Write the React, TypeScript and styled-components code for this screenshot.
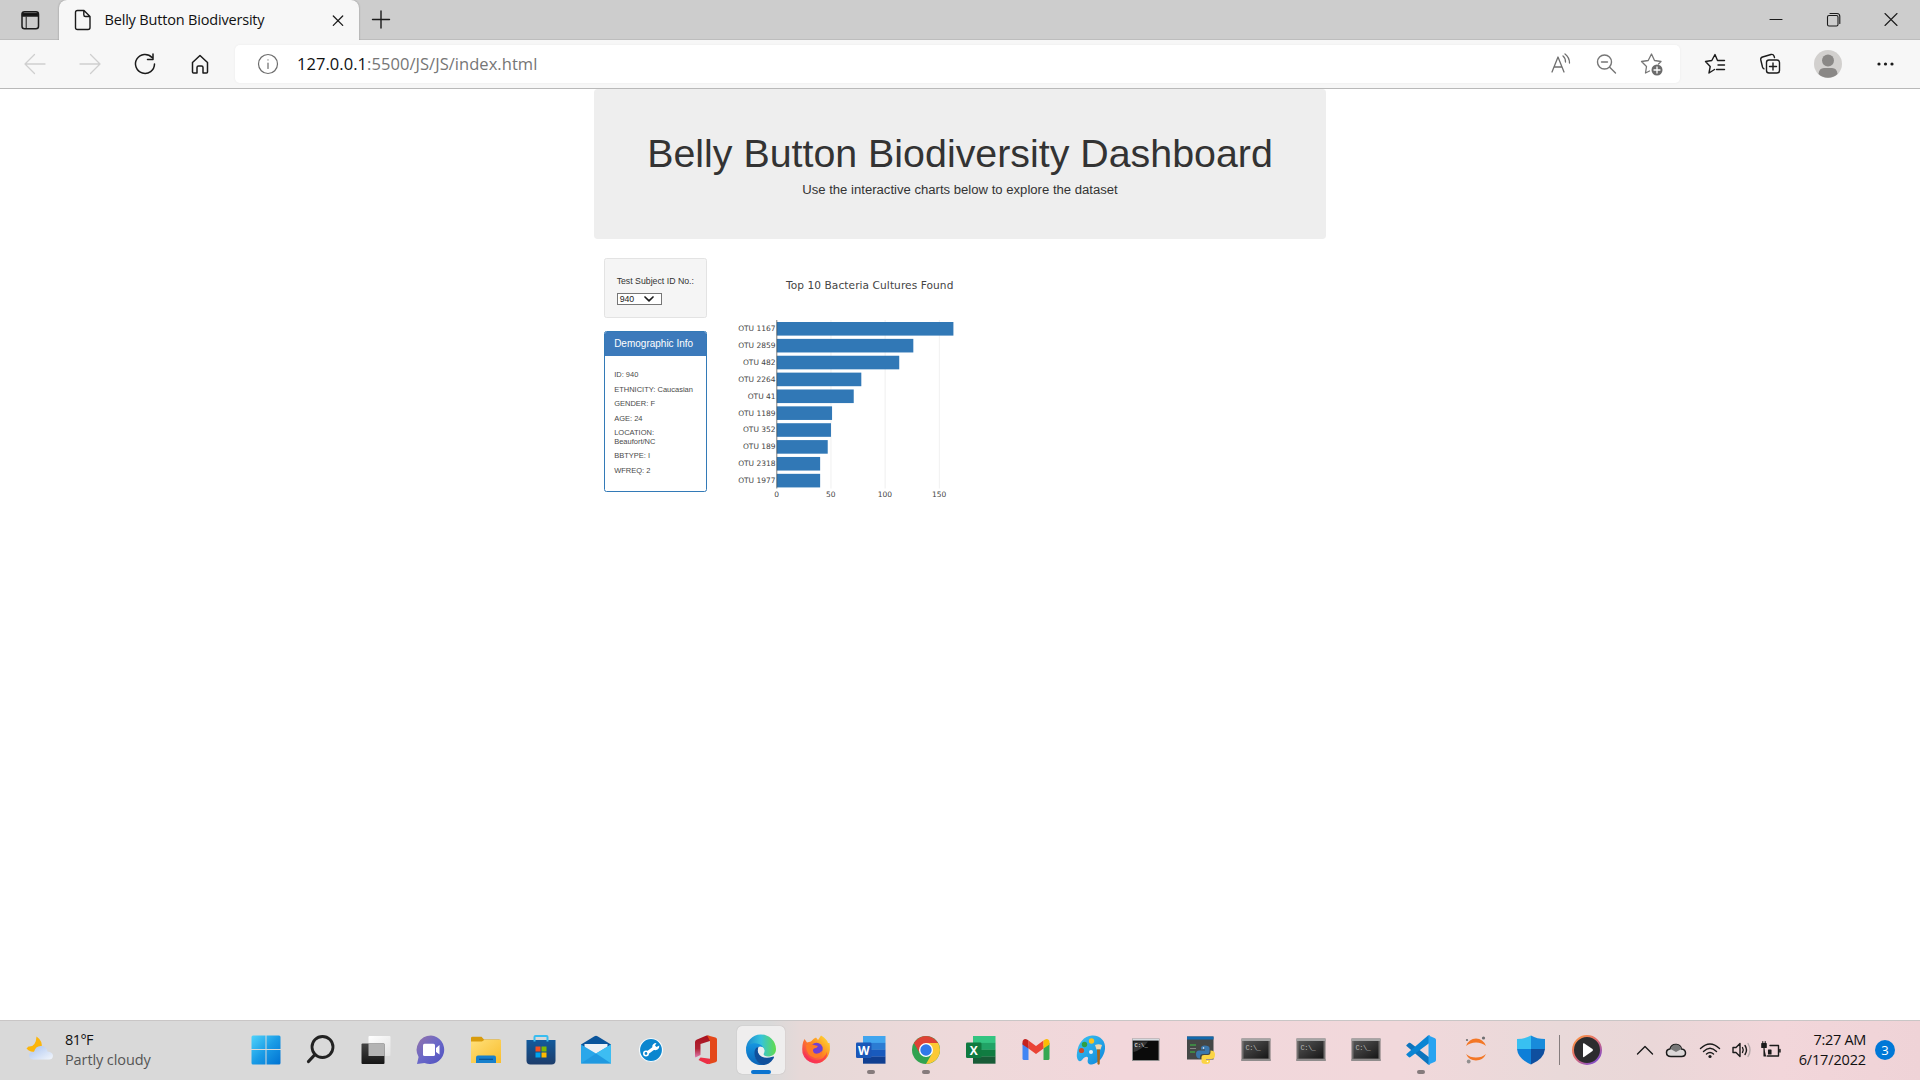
import React from "react";
import styled, { createGlobalStyle } from "styled-components";

const Global = createGlobalStyle`
  * { box-sizing: border-box; }
  html, body { margin: 0; padding: 0; background: #fff; }
  body { width: 1920px; height: 1080px; overflow: hidden; }
`;

const ui = `"Open Sans", "Noto Sans", sans-serif`;
const arial = `"Liberation Sans", Arial, sans-serif`;

const Screen = styled.div`
  width: 1920px;
  height: 1080px;
  display: flex;
  flex-direction: column;
  background: #fff;
  font-family: ${ui};
`;

const Label = styled.span<{ $size: number; $gap?: number; $color?: string }>`
  font-size: ${(p) => p.$size}px;
  letter-spacing: ${(p) => p.$gap ?? 0}px;
  color: ${(p) => p.$color ?? "#111"};
  white-space: nowrap;
`;

/* ---------- browser frame ---------- */

const TabStrip = styled.div`
  height: 40px;
  flex: none;
  display: flex;
  align-items: stretch;
  background: #cdcdcd;
  box-shadow: inset 0 -1px 0 #bdbdbd;
`;

const TabMenu = styled.div`
  width: 59px;
  display: flex;
  align-items: center;
  justify-content: center;
`;

const Tab = styled.div`
  width: 300px;
  display: flex;
  align-items: center;
  padding: 0 13px 0 14px;
  background: #f7f7f7;
  border-radius: 8px 8px 0 0;
  box-shadow: 0 0 2px rgba(0, 0, 0, 0.35);
  clip-path: inset(0 -3px 0 -3px);
`;

const TabTitle = styled.div`
  flex: 1;
  padding: 0 0 2px 11.5px;
  line-height: 20px;
`;

const NewTab = styled.div`
  width: 43px;
  display: flex;
  align-items: center;
  justify-content: center;
`;

const WindowButtons = styled.div`
  margin-left: auto;
  display: flex;
  align-items: center;
`;

const WindowButton = styled.div`
  width: 57.5px;
  display: flex;
  justify-content: center;
`;

const Toolbar = styled.div`
  height: 49px;
  flex: none;
  display: flex;
  align-items: center;
  background: #f7f7f7;
  border-bottom: 1px solid #b9b9b9;
`;

const NavButtons = styled.div`
  width: 235px;
  display: flex;
  padding-left: 7px;
`;

const ToolButton = styled.div<{ $w: number }>`
  width: ${(p) => p.$w}px;
  height: 32px;
  display: flex;
  align-items: center;
  justify-content: center;
  padding-bottom: 1px;
`;

const AddressBar = styled.div`
  width: 1445px;
  height: 38px;
  display: flex;
  align-items: center;
  padding: 0 4px 0 16px;
  background: #fff;
  border-radius: 5px;
  box-shadow: 0 0 3px rgba(0, 0, 0, 0.05);
`;

const Url = styled.div`
  flex: 1;
  padding: 0 0 1px 13px;
  line-height: 24px;
`;

const ToolbarEnd = styled.div`
  display: flex;
  padding-left: 7px;
`;

/* ---------- page ---------- */

const Page = styled.main`
  flex: 1;
  min-height: 0;
  font-family: ${arial};
  color: #333;
`;

const Container = styled.div`
  width: 731.25px;
  margin: 0 auto;
`;

const Jumbotron = styled.header`
  padding: 30px 37.5px;
  margin-bottom: 18.75px;
  background: #eee;
  border-radius: 3.75px;
  text-align: center;
  display: flow-root;
`;

const Title = styled.h1`
  margin: 12.5px -10px 6.25px;
  font-size: 39.375px;
  font-weight: 400;
  line-height: 1.1;
  white-space: nowrap;
`;

const Lead = styled.p`
  margin: 0 0 9.375px;
  font-size: 13.125px;
  line-height: 18.375px;
`;

const Row = styled.div`
  display: flex;
  align-items: flex-start;
`;

const Sidebar = styled.aside`
  width: 121.875px;
  padding: 0 9.375px;
`;

const Well = styled.section`
  height: 60px;
  margin-bottom: 13px;
  padding: 11.875px;
  background: #f5f5f5;
  border: 1px solid #e3e3e3;
  border-radius: 2.5px;
`;

const WellTitle = styled.h5`
  margin: 6.25px 0 6.3px;
  font-size: 8.75px;
  font-weight: 400;
  line-height: 9.6px;
  white-space: nowrap;
`;

const SelectBox = styled.div`
  width: 45px;
  height: 12px;
  display: flex;
  align-items: center;
  justify-content: space-between;
  padding: 0 6px 0 2px;
  border: 1px solid #767676;
  background: #fff;
  color: #222;
  font-size: 8.75px;
  line-height: 10px;
`;

const Panel = styled.section`
  height: 161px;
  border: 1px solid #337ab7;
  border-radius: 2.5px;
  background: #fff;
  overflow: hidden;
`;

const PanelHeading = styled.div`
  height: 24px;
  padding: 6px 9.4px;
  background: #3c7abb;
  color: #fff;
  font-size: 10px;
  line-height: 11px;
  white-space: nowrap;
`;

const PanelBody = styled.div`
  padding: 15.9px 0 0 9.4px;
  display: flex;
  flex-direction: column;
  gap: 6.25px;
`;

const Fact = styled.h6`
  margin: 0;
  color: #4a4a4a;
  font-size: 7.5px;
  font-weight: 400;
  line-height: 8.25px;
  white-space: pre;
`;

const ChartArea = styled.div`
  width: 260px;
  height: 260px;
  margin-left: 9.375px;
  svg { display: block; }
`;

/* ---------- taskbar ---------- */

const Taskbar = styled.footer`
  height: 60px;
  flex: none;
  display: flex;
  align-items: center;
  border-top: 1px solid #c9c6c6;
  background: linear-gradient(90deg, #d9d9d9 0, #d9d9d9 770px, #e6d9d8 800px, #eed9da 960px, #f2d7db 1120px, #f1d8db 1400px, #e9d9d9 1560px, #ead7d8 1650px, #f2d6da 1780px, #efd3d7 1920px);
`;

const Weather = styled.div`
  width: 238.5px;
  padding: 0 0 1px 25px;
  display: flex;
  align-items: center;
`;

const WeatherText = styled.div`
  padding-left: 12px;
  display: flex;
  flex-direction: column;
  line-height: 20px;
`;

const Apps = styled.div`
  display: flex;
`;

const AppSlot = styled.div`
  position: relative;
  width: 55.02px;
  height: 59px;
  padding-bottom: 2px;
  display: flex;
  align-items: center;
  justify-content: center;
  svg { display: block; position: relative; }
`;

const ActiveTile = styled.div`
  position: absolute;
  left: 3.5px;
  top: 5px;
  width: 48px;
  height: 48px;
  background: #efeeee;
  border-radius: 5px;
  box-shadow: 0 0 1px rgba(0, 0, 0, 0.25);
`;

const Indicator = styled.i<{ $active?: boolean }>`
  position: absolute;
  bottom: 6px;
  left: 50%;
  transform: translateX(-50%);
  width: ${(p) => (p.$active ? 20 : 8)}px;
  height: 4px;
  border-radius: 2px;
  background: ${(p) => (p.$active ? "#0a74d0" : "#857b7c")};
`;

const Divider = styled.div`
  width: 1px;
  height: 30px;
  margin-bottom: 1px;
  background: #857c7d;
`;

const PlayerSlot = styled.div`
  width: 54px;
  padding-bottom: 2px;
  display: flex;
  justify-content: center;
  svg { display: block; }
`;

const Tray = styled.div`
  flex: 1;
  display: flex;
  align-items: center;
  justify-content: flex-end;
  padding: 0 25px 2px 0;
  svg { display: block; }
`;

const TrayIcons = styled.div`
  display: flex;
  align-items: center;
  margin-right: 10px;
`;

const TraySlot = styled.div<{ $w: number }>`
  width: ${(p) => p.$w}px;
  display: flex;
  justify-content: center;
`;

const Clock = styled.div`
  width: 70px;
  display: flex;
  flex-direction: column;
  align-items: flex-end;
  line-height: 20px;
`;

const Badge = styled.div`
  width: 20px;
  height: 20px;
  margin-left: 9px;
  border-radius: 50%;
  background: #0078d7;
  color: #fff;
  font-size: 13px;
  line-height: 20px;
  text-align: center;
`;

/* ---------- chart ---------- */

const data: [string, number][] = [
  ["OTU 1167", 163], ["OTU 2859", 126], ["OTU 482", 113], ["OTU 2264", 78], ["OTU 41", 71],
  ["OTU 1189", 51], ["OTU 352", 50], ["OTU 189", 47], ["OTU 2318", 40], ["OTU 1977", 40],
];

const unit = 1.0835;
const pitch = 16.87;

const ChartText = styled.text`
  font-family: "DejaVu Sans", Verdana, sans-serif;
  fill: #444;
`;

const BarChart = () => (
  <svg width="260" height="260" viewBox="725.6 258 260 260">
    <ChartText x="785.5" y="289" fontSize="10.6" textLength="167.5">Top 10 Bacteria Cultures Found</ChartText>
    {[50, 100, 150].map((v) => (
      <path key={v} d={`M${776.4 + v * unit} 320V488.5`} stroke="#eee" strokeWidth="0.9" />
    ))}
    {data.map(([name, value], i) => (
      <g key={name}>
        <rect x="776.4" y={322 + i * pitch} width={value * unit} height="13.6" fill="#3178b6" />
        <ChartText x="775.2" y={331.2 + i * pitch} fontSize="7.5" textAnchor="end">{name}</ChartText>
      </g>
    ))}
    <path d="M776.4 320V488.5" stroke="#444" strokeWidth="0.7" />
    {[0, 50, 100, 150].map((v) => (
      <ChartText key={v} x={776.2 + v * unit} y="497" fontSize="7.5" textAnchor="middle">{v}</ChartText>
    ))}
  </svg>
);

/* ---------- icons ---------- */

const Line = ({ w, h = w, c = "#1b1b1b", s = 1.3, box, children }: {
  w: number; h?: number; c?: string; s?: number; box?: string; children: React.ReactNode;
}) => (
  <svg width={w} height={h} viewBox={box ?? `0 0 ${w} ${h}`} fill="none" stroke={c} strokeWidth={s} strokeLinecap="round" strokeLinejoin="round">
    {children}
  </svg>
);

const Ic = ({ children }: { children: React.ReactNode }) => (
  <svg width="32" height="32" viewBox="0 0 32 32">{children}</svg>
);

const StartIcon = () => (
  <Ic>
    <defs><linearGradient id="win" x1="0" y1="0" x2="1" y2="1"><stop offset="0" stopColor="#4fd3fb" /><stop offset=".5" stopColor="#1a9ce6" /><stop offset="1" stopColor="#0072d2" /></linearGradient></defs>
    <path fill="url(#win)" d="M3 1.5H15.5V15H1.500V3Q1.500 1.500 3 1.500ZM16.500 1.500H29Q30.500 1.500 30.500 3V15H16.500ZM1.500 16H15.500V30.500H3Q1.500 30.500 1.500 29ZM16.500 16H30.500V29Q30.500 30.500 29 30.500H16.500Z" />
  </Ic>
);
const SearchIcon = () => (
  <Ic><circle cx="17.500" cy="13" r="10.500" fill="none" stroke="#222" strokeWidth="2.800" /><path d="M10 20.500L3.500 27.500" stroke="#222" strokeWidth="3.200" strokeLinecap="round" /></Ic>
);
const TaskViewIcon = () => (
  <Ic>
    <defs>
      <linearGradient id="tv" x2="0" y2="1"><stop stopColor="#444" /><stop offset="1" stopColor="#161616" /></linearGradient>
      <linearGradient id="tw" x2="1" y2="1"><stop stopColor="#fff" /><stop offset="1" stopColor="#e3e3e3" /></linearGradient>
    </defs>
    <rect x="8.500" y="2" width="22" height="20" rx="1" fill="url(#tw)" />
    <rect x="1.500" y="9.500" width="23" height="20.500" rx="1" fill="url(#tv)" />
    <path d="M8.500 9.500H24.500V22H8.500Z" fill="#b4b4b4" />
  </Ic>
);
const ChatIcon = () => (
  <Ic>
    <defs><linearGradient id="chat" x2="1" y2="1"><stop stopColor="#9573a8" /><stop offset=".5" stopColor="#6a68c8" /><stop offset="1" stopColor="#4f50c0" /></linearGradient></defs>
    <path d="M16 1.500A14.300 14.300 0 1 1 9.500 29L2 30L3.600 23A14.300 14.300 0 0 1 16 1.500Z" fill="url(#chat)" />
    <rect x="8" y="9.700" width="12" height="12.300" rx="1.500" fill="#fff" /><path d="M21 14L24.500 11V20.500L21 18Z" fill="#fff" />
  </Ic>
);
const FolderIcon = () => (
  <Ic>
    <defs><linearGradient id="fold" x2="1" y2="1"><stop stopColor="#ffe07a" /><stop offset="1" stopColor="#f9bd2c" /></linearGradient></defs>
    <path d="M1 4Q1 2.700 2.500 2.700H11.500L14 5.500H29Q31 5.500 31 7V12H1Z" fill="#d89b0c" />
    <path d="M1 7.500H12L14.500 5.700H31V29H1Z" fill="url(#fold)" />
    <path d="M6 29V23.500Q6 21.500 8 21.500H24Q26 21.500 26 23.500V29Z" fill="#1780cc" /><path d="M9 25.300H23" stroke="#0a5290" strokeWidth="1.200" />
  </Ic>
);
const StoreIcon = () => (
  <Ic>
    <defs><linearGradient id="store" x2="0" y2="1"><stop stopColor="#125a9c" /><stop offset="1" stopColor="#1d3d6b" /></linearGradient></defs>
    <path d="M9.500 8V3Q9.500 2 10.500 2H21.500Q22.500 2 22.500 3V8" fill="none" stroke="#38bdf0" strokeWidth="2" />
    <path d="M1.500 6H30.500V26.500Q30.500 30.500 26.500 30.500H5.500Q1.500 30.500 1.500 26.500Z" fill="url(#store)" />
    <path d="M9.500 6V7.500M22.500 6V7.500" stroke="#38bdf0" strokeWidth="2" />
    <path fill="#f25022" d="M10.500 12.500h5v5h-5z" /><path fill="#7fba00" d="M16.500 12.500h5v5h-5z" /><path fill="#00a4ef" d="M10.500 18.500h5v5h-5z" /><path fill="#ffb900" d="M16.500 18.500h5v5h-5z" />
  </Ic>
);
const MailIcon = () => (
  <Ic>
    <path d="M1 10.500L14.500 2.200Q16 1.300 17.500 2.200L31 10.500V20H1Z" fill="#0a549b" />
    <path d="M4.500 10H27.500V20H4.500Z" fill="#eef1f5" />
    <path d="M1 10.500L16 19.500L31 10.500V29.500H1Z" fill="#2aa7ea" />
    <path d="M16 19.500L31 10.500V29.500Z" fill="#3dbdf2" /><path d="M16 19.500L31 29.500H1Z" fill="#1c93dc" opacity=".7" />
  </Ic>
);
const WrenchIcon = () => (
  <Ic>
    <circle cx="16" cy="16" r="11.500" fill="#0a86cf" stroke="#f6fafc" strokeWidth="1.200" />
    <path d="M12.500 18.700L20 13.300" stroke="#fff" strokeWidth="3.200" fill="none" />
    <circle cx="11" cy="19.500" r="2.200" fill="none" stroke="#fff" strokeWidth="1.600" />
    <path d="M18.500 15.800Q22.500 17 24 14L24.300 11.500L21.500 13L20 11.500L21.500 9L19.500 9.300Q16.500 11 17.500 13.500Z" fill="#fff" />
  </Ic>
);
const OfficeIcon = () => (
  <Ic>
    <defs><linearGradient id="off" x2="0" y2="1"><stop stopColor="#a80f1c" /><stop offset=".6" stopColor="#b02435" /><stop offset="1" stopColor="#e07bb0" /></linearGradient></defs>
    <path d="M5 8Q5 6.500 6.500 5.800L16.500 1.500L20 2V7L10.500 10V21L5.500 23.500Q5 23 5 22Z" fill="url(#off)" />
    <path d="M17 1.200L25.500 3.500Q27 4 27 5.500V26.500Q27 27.800 25.500 28.200L18.500 30.200L20 27V7Z" fill="#e4481a" />
    <path d="M8.500 26L10.500 23.500L20 24.800V28.500Q19.500 30.500 17 30Z" fill="#ec2f45" />
  </Ic>
);
const EdgeIcon = () => (
  <Ic>
    <defs>
      <linearGradient id="ea" x1="0" x2="1"><stop stopColor="#1a86d0" /><stop offset=".5" stopColor="#35c3dc" /><stop offset="1" stopColor="#62dc4a" /></linearGradient>
      <linearGradient id="eb" x2="0" y2="1"><stop stopColor="#1595e0" /><stop offset="1" stopColor="#0b64b8" /></linearGradient>
    </defs>
    <path d="M1 16A15 15 0 0 1 31 15C31 20.500 27 22.500 23 22.500C19.500 22.500 18 21 18.800 19.500C21 16 18 12 13.500 11.500C7.500 10.500 2 13 1 16Z" fill="url(#ea)" />
    <path d="M1 16C2 8 14 7.500 18 13C13.500 11 10 14.500 10 19C10 26 15 30 19.500 30.600A15 15 0 0 1 1 16Z" fill="url(#eb)" />
    <path d="M9.500 19C9.500 15 11.500 13 13.500 13C11 21 18 26 27.500 22.700Q30 22 28.500 24.500C25 30 20.500 31.500 17.500 30.700C12 29 9.500 24 9.500 19Z" fill="#10509c" />
    <circle cx="16" cy="16.500" r="3.200" fill="#e9eef2" />
  </Ic>
);
const FirefoxIcon = () => (
  <Ic>
    <defs><linearGradient id="ff" x1="1" y1="0" x2="0" y2="1"><stop stopColor="#ffe838" /><stop offset=".45" stopColor="#ff8a20" /><stop offset="1" stopColor="#f0186e" /></linearGradient></defs>
    <path d="M4.500 5L7 8.500L11 7.500Q14 4 16 3.500L18 6L21 1.500Q27 5 28 9L29.500 9Q31 16 28 22A13.800 13.800 0 0 1 2.500 19Q1.500 10 4.500 5Z" fill="url(#ff)" />
    <circle cx="16.500" cy="15" r="6.200" fill="#7140d2" />
    <path d="M6 11Q10 9 14 11L18 12Q17 14 14 14.500Q12 16 14 19Q18 21 22 17Q22 24 15 24Q6 22 6 11Z" fill="#ff7b25" />
    <path d="M4 17Q8 26 17 26Q25 25 27 18Q28 27 17 29.500Q6 29 4 17Z" fill="#fb2c55" opacity=".7" />
  </Ic>
);
const OfficeDoc = ({ letter, tones, tile }: { letter: string; tones: string[]; tile: string }) => (
  <Ic>
    {tones.map((t, i) => <path key={t} d={`M8 ${2 + i * 6.9}h22.500v7h-22.500z`} fill={t} />)}
    <rect x="1" y="8.500" width="15.500" height="15.500" rx="1.300" fill={tile} />
    <text x="8.700" y="20.600" fontFamily="Open Sans" fontWeight="700" fontSize="12" fill="#fff" textAnchor="middle">{letter}</text>
  </Ic>
);
const ChromeIcon = () => (
  <Ic>
    <circle cx="16" cy="16" r="14" fill="#31a350" />
    <path d="M3.900 9A14 14 0 0 1 28.100 9H16L9.900 19.500Z" fill="#de4235" />
    <path d="M28.100 9A14 14 0 0 1 16 30L22 19.500L16 9Z" fill="#fcc934" />
    <circle cx="16" cy="16" r="7" fill="#fff" /><circle cx="16" cy="16" r="5.700" fill="#3079e8" />
  </Ic>
);
const GmailIcon = () => (
  <Ic>
    <path d="M2.500 9V24.500Q2.500 26 4 26H8.500V12Z" fill="#4285f4" /><path d="M23.500 12V26H28Q29.500 26 29.500 24.500V9Z" fill="#34a853" />
    <path d="M8.500 6.500L16 12L23.500 6.500V14.500L16 20L8.500 14.500Z" fill="#ea4335" />
    <path d="M2.500 8.500Q2.500 5 5.500 5Q7 5 8.500 6.500V14.500L2.500 10.500Z" fill="#c5221f" /><path d="M29.500 8.500Q29.500 5 26.500 5Q25 5 23.500 6.500V14.500L29.500 10.500Z" fill="#fbbc04" />
  </Ic>
);
const PaintIcon = () => (
  <Ic>
    <defs><linearGradient id="pt" x2="1" y2="1"><stop stopColor="#3cc4f0" /><stop offset="1" stopColor="#0f86dc" /></linearGradient></defs>
    <path d="M17 1.500C25 1 31 7 30 15C29 23 24 29 17 30.500C13 31 12 28 13 25C13.500 22 10 22 7 26C4 29.500 1 25 2 19C3 9 9 2 17 1.500Z" fill="url(#pt)" />
    <circle cx="16.500" cy="7" r="2.700" fill="#fcc21b" /><circle cx="9.500" cy="10.500" r="2.700" fill="#2f9f43" /><circle cx="6.500" cy="16.500" r="2.600" fill="#d14a26" /><circle cx="16" cy="18" r="2" fill="#e8edf1" />
    <path d="M20 11Q23.500 9.500 27 11L25.500 15.500H21.500Z" fill="#eed6ae" /><path d="M22 15.500H25L24.700 30Q23.500 31.500 22.500 30Z" fill="#a5661c" />
  </Ic>
);
const CmdIcon = () => (
  <Ic>
    <rect x="2.500" y="5" width="26.500" height="21.500" fill="#0b0b0b" stroke="#8d8d8d" /><path d="M2.500 5.700H29" stroke="#d5dbe0" strokeWidth="1.800" />
    <path d="M3.500 7.500V18Q12 16 18 7.500Z" fill="#353535" />
    <text x="4.500" y="12.700" fontFamily="Liberation Mono" fontSize="5.500" fill="#fff">C:\_</text>
  </Ic>
);
const ConsoleIcon = () => (
  <Ic>
    <defs><linearGradient id="con" x2="1" y2="1"><stop stopColor="#555" /><stop offset="1" stopColor="#161616" /></linearGradient></defs>
    <path d="M1.500 4.500H30.500V27H1.500Z" fill="#73706f" /><path d="M1.500 4.500H30.500V7H1.500Z" fill="#a6a5a5" /><path d="M1.500 25H30.500V27H1.500Z" fill="#8f8c8c" />
    <rect x="3.500" y="7" width="25" height="17.500" fill="url(#con)" />
    <text x="5.500" y="15.500" fontFamily="Liberation Mono" fontSize="7" letterSpacing="-0.500" fill="#bbb">C:\_</text>
  </Ic>
);
const PythonIcon = () => (
  <Ic>
    <path d="M2 2.500H28.500V25.500H2Z" fill="#444746" /><path d="M2 2.500H28.500V5.500H2Z" fill="#1369ad" />
    <path d="M5 11H11M5 18H10" stroke="#3e9c45" strokeWidth="1.300" /><path d="M5 14.500H11" stroke="#888" />
    <path d="M16 19V14Q16 11.500 19.500 11.500Q24.500 11.500 24.500 14V18Q24.500 20 22.500 20H18Q15 20 15 23V24.500Q11 24.500 11 20Q11 16.500 14 16.500H20V15.500H16Z" fill="#3a77ad" />
    <path d="M25.500 16.500Q30 16.500 30 20.500Q30 25 26.500 25H21V26H25V27.500Q25 30 21 30Q16.500 30 16.500 27.500V23Q16.500 21 19 21H23Q25.500 21 25.500 18Z" fill="#fbd444" />
    <circle cx="18.500" cy="14" r=".8" fill="#fff" /><circle cx="22.500" cy="27.500" r=".8" fill="#fff" />
  </Ic>
);
const CodeIcon = () => (
  <Ic>
    <path d="M1.500 11L4 8.800Q4.800 8.400 5.500 9L25 24V30.500L23 30.500L1.500 12Q1 11.500 1.500 11Z" fill="#0d74bd" />
    <path d="M1.500 21L4 23.300Q4.800 23.700 5.500 23L25 8.500V1.500L23 1.500L1.500 20Q1 20.500 1.500 21Z" fill="#0a84d3" />
    <path d="M23 1.200L30 4.200Q31 4.800 31 6V26Q31 27.200 30 27.800L23 30.800Q23.500 30 23.500 29V3Q23.500 2 23 1.200Z" fill="#28a3f1" />
  </Ic>
);
const JupyterIcon = () => (
  <Ic>
    <path d="M6 12Q9 4.500 16 4.500Q23 4.500 26 12Q22 8.500 16 8.500Q10 8.500 6 12ZM6 20Q10 23.500 16 23.500Q22 23.500 26 20Q23 26.500 16 26.500Q9 26.500 6 20Z" fill="#f37726" />
    <circle cx="23.500" cy="4" r="1.600" fill="#6e6e70" /><circle cx="7" cy="6" r="1.100" fill="#6e6e70" /><circle cx="8.700" cy="27.500" r="1.900" fill="#918f8f" />
  </Ic>
);
const ShieldIcon = () => (
  <Ic>
    <path d="M16 1.500Q10 5 2 5V15H16Z" fill="#38c0f1" /><path d="M16 1.500Q22 5 30 5V15H16Z" fill="#188bdb" />
    <path d="M2 15H16V30.500Q3 25 2 15Z" fill="#0d7fd8" /><path d="M30 15H16V30.500Q29 25 30 15Z" fill="#0f4f9f" />
  </Ic>
);
const PlayerIcon = () => (
  <Ic>
    <defs><linearGradient id="ring" x2=".8" y2="1"><stop stopColor="#ff9a3c" /><stop offset=".5" stopColor="#e06c70" /><stop offset="1" stopColor="#7d4bd0" /></linearGradient></defs>
    <circle cx="16" cy="16" r="14" fill="#2c2c2e" stroke="url(#ring)" strokeWidth="2" /><path d="M12 10V22.500Q12 23.500 13 23L21.500 17Q22.500 16 21.500 15L13 9.300Q12 9 12 10Z" fill="#fff" />
  </Ic>
);
const WeatherIcon = () => (
  <svg width="28" height="28" viewBox="0 0 28 28">
    <defs><linearGradient id="cl" x2="1" y2="1"><stop stopColor="#a9c3ef" /><stop offset="1" stopColor="#f2f6fc" /></linearGradient></defs>
    <path d="M11.500 .5Q18 5 16.500 12Q13 17 6 15.500Q3 14.500 1.500 12.500L3.500 10.500Q11 11 11.500 .5Z" fill="#fbb50b" />
    <path d="M8.500 23.500Q4 23 4 19.500Q4.500 15.500 9 16Q10.500 9.500 16.500 10Q21.500 10 22.500 15.500Q28 16 28 20Q27.500 23.500 24 23.500Z" fill="url(#cl)" />
  </svg>
);

const apps: { id: string; icon: React.ReactNode; state?: "open" | "active" }[] = [
  { id: "start", icon: <StartIcon /> },
  { id: "search", icon: <SearchIcon /> },
  { id: "tasks", icon: <TaskViewIcon /> },
  { id: "chat", icon: <ChatIcon /> },
  { id: "files", icon: <FolderIcon /> },
  { id: "store", icon: <StoreIcon /> },
  { id: "mail", icon: <MailIcon /> },
  { id: "support", icon: <WrenchIcon /> },
  { id: "office", icon: <OfficeIcon /> },
  { id: "edge", icon: <EdgeIcon />, state: "active" },
  { id: "firefox", icon: <FirefoxIcon /> },
  { id: "word", icon: <OfficeDoc letter="W" tones={["#41a5ee", "#2b7cd3", "#185abd", "#103f91"]} tile="#1a57b8" />, state: "open" },
  { id: "chrome", icon: <ChromeIcon />, state: "open" },
  { id: "excel", icon: <OfficeDoc letter="X" tones={["#33c481", "#21a366", "#107c41", "#185c37"]} tile="#107a40" /> },
  { id: "gmail", icon: <GmailIcon /> },
  { id: "paint", icon: <PaintIcon /> },
  { id: "cmd", icon: <CmdIcon /> },
  { id: "python", icon: <PythonIcon /> },
  { id: "console1", icon: <ConsoleIcon /> },
  { id: "console2", icon: <ConsoleIcon /> },
  { id: "console3", icon: <ConsoleIcon /> },
  { id: "code", icon: <CodeIcon />, state: "open" },
  { id: "jupyter", icon: <JupyterIcon /> },
  { id: "security", icon: <ShieldIcon /> },
];

const facts = ["ID: 940", "ETHNICITY: Caucasian", "GENDER: F", "AGE: 24", "LOCATION:\nBeaufort/NC", "BBTYPE: I", "WFREQ: 2"];

export default function App() {
  return (
    <Screen>
      <Global />
      <TabStrip>
        <TabMenu>
          <Line w={20} s={1.5}>
            <rect x="2" y="1.700" width="16.500" height="17" rx="2.500" />
            <path d="M2.500 3.500H18V6H2.500Z" fill="#111" /><path d="M6.200 7V18.500" strokeWidth="1" />
          </Line>
        </TabMenu>
        <Tab>
          <Line w={20} h={22} s={1.4}>
            <path d="M4.500 1.500H11L17 7.500V18.500Q17 20.500 15 20.500H4.500Q2.500 20.500 2.500 18.500V3.500Q2.500 1.500 4.500 1.500ZM10.800 1.700V5.700Q10.800 7.500 12.500 7.500H16.800" />
          </Line>
          <TabTitle><Label $size={14.5} $gap={-0.18}>Belly Button Biodiversity</Label></TabTitle>
          <Line w={16} h={16} s={1.3}><path d="M3.300 4L12.700 13.400M12.700 4L3.300 13.400" /></Line>
        </Tab>
        <NewTab><Line w={20} s={1.4}><path d="M10 1V18M1.500 9.500H18.500" /></Line></NewTab>
        <WindowButtons>
          <WindowButton><Line w={16} s={1.1}><path d="M2 7.500H14" /></Line></WindowButton>
          <WindowButton><Line w={16} s={1.1}><rect x="1.500" y="3.500" width="10.500" height="10.500" rx="1.500" /><path d="M4 1.500H11Q13.800 1.500 13.800 4.500V11.500" /></Line></WindowButton>
          <WindowButton><Line w={16} s={1.1}><path d="M2 1.500L14 13.500M14 1.500L2 13.500" /></Line></WindowButton>
        </WindowButtons>
      </TabStrip>
      <Toolbar>
        <NavButtons>
          <ToolButton $w={55}><Line w={24} c="#cfcfcf"><path d="M22 12H2.500M11.500 2.500L2 12L11.500 21.500" /></Line></ToolButton>
          <ToolButton $w={55}><Line w={24} c="#cfcfcf"><path d="M2 12H21.500M12.500 2.500L22 12L12.500 21.500" /></Line></ToolButton>
          <ToolButton $w={55}><Line w={24} s={1.5}><path d="M21.500 12A9.500 9.500 0 1 1 19 5.500M20 2V7.500H14.500" /></Line></ToolButton>
          <ToolButton $w={55}><Line w={24} s={1.5}><path d="M4.500 10.500L12 3.500L19.500 10.500V20Q19.500 21 18.500 21H15V15.500Q15 14 13.500 14H10.500Q9 14 9 15.500V21H5.500Q4.500 21 4.500 20Z" /></Line></ToolButton>
        </NavButtons>
        <AddressBar>
          <ToolButton $w={33}><Line w={22} c="#6c6c6c" s={1.2}><circle cx="11" cy="11" r="9.500" /><path d="M11 10V15.500M11 6.800V7" /></Line></ToolButton>
          <Url><Label $size={16.5} $gap={0.05}>127.0.0.1</Label><Label $size={16.5} $gap={0.05} $color="#767676">:5500/JS/JS/index.html</Label></Url>
          <ToolButton $w={45}><Line w={22} c="#6f6f6f" s={1.3}><path d="M2 19L8 4L14 19M4.300 14H11.700M13 3Q15.500 5 15.500 9M15 1Q19.500 4.500 19.500 10" /></Line></ToolButton>
          <ToolButton $w={45}><Line w={22} c="#767676" s={1.4}><circle cx="9.500" cy="9" r="7" /><path d="M6.500 9H12.500M14.700 14.200L20.500 20" /></Line></ToolButton>
          <ToolButton $w={48}>
            <Line w={24} c="#767676" s={1.3}><path d="M9.500 19L5.500 21L6.500 14.500L1.500 9.500L8.200 8.500L11.500 2L14.500 8.500L21 9.500L18.500 12" /><circle cx="17" cy="18" r="5.500" fill="#6b6b6b" stroke="none" /><path d="M17 15V21M14 18H20" stroke="#fff" /></Line>
          </ToolButton>
        </AddressBar>
        <ToolbarEnd>
          <ToolButton $w={56}><Line w={24} s={1.4}><path d="M11.500 17.500L6 21L7.200 14.500L2.500 9.500L8.800 8.500L12 2.500L14.500 8.500H21.500M15 13H21.500M13.500 17.500H21.500" /></Line></ToolButton>
          <ToolButton $w={54}><Line w={24} s={1.4}><rect x="8.500" y="8" width="13" height="13" rx="2.500" /><path d="M15 11V18M11.500 14.500H18.500M16.500 5.500L16 4Q15.200 2 13 2.500L4.500 5Q2.300 5.700 2.800 8L4.500 15Q5 16.500 6 16.800" /></Line></ToolButton>
          <ToolButton $w={61}>
            <svg width="28" height="28" viewBox="0 0 28 28"><circle cx="14" cy="14" r="14" fill="#d2d0ce" /><circle cx="14" cy="10.500" r="6" fill="#8a8886" /><path d="M4.500 24Q5 18 10 18H18Q23 18 23.500 24A14 14 0 0 1 4.500 24Z" fill="#8a8886" /></svg>
          </ToolButton>
          <ToolButton $w={55}><Line w={20} s={0}><g fill="#1b1b1b"><circle cx="3" cy="10" r="1.600" /><circle cx="9.500" cy="10" r="1.600" /><circle cx="16" cy="10" r="1.600" /></g></Line></ToolButton>
        </ToolbarEnd>
      </Toolbar>
      <Page>
        <Container>
          <Jumbotron>
            <Title>Belly Button Biodiversity Dashboard</Title>
            <Lead>Use the interactive charts below to explore the dataset</Lead>
          </Jumbotron>
          <Row>
            <Sidebar>
              <Well>
                <WellTitle>Test Subject ID No.:</WellTitle>
                <SelectBox>940<Line w={12} h={8} s={1.7}><path d="M2 2L6 5.800L10 2" /></Line></SelectBox>
              </Well>
              <Panel>
                <PanelHeading>Demographic Info</PanelHeading>
                <PanelBody>{facts.map((f) => <Fact key={f}>{f}</Fact>)}</PanelBody>
              </Panel>
            </Sidebar>
            <ChartArea><BarChart /></ChartArea>
          </Row>
        </Container>
      </Page>
      <Taskbar>
        <Weather>
          <WeatherIcon />
          <WeatherText>
            <Label $size={14.5} $gap={-0.6}>81°F</Label>
            <Label $size={14.5} $gap={-0.1} $color="#555">Partly cloudy</Label>
          </WeatherText>
        </Weather>
        <Apps>
          {apps.map((a) => (
            <AppSlot key={a.id}>
              {a.state === "active" && <ActiveTile />}
              {a.icon}
              {a.state && <Indicator $active={a.state === "active"} />}
            </AppSlot>
          ))}
        </Apps>
        <Divider />
        <PlayerSlot><PlayerIcon /></PlayerSlot>
        <Tray>
          <TrayIcons>
            <TraySlot $w={31}><Line w={18} s={1.4}><path d="M1.500 13L9 5.500L16.500 13" /></Line></TraySlot>
            <TraySlot $w={32}>
              <Line w={22} h={18} s={1.5}><path d="M6 15.500Q1.500 15.500 1.500 11.500Q1.500 8.500 5 8Q6.500 3 11.500 3.500Q15.500 4 16.500 8Q20.500 8.500 20.500 12Q20.500 15.500 16.500 15.500Z" fill="#dcd8d8" /><path d="M5.500 8Q6.500 3.500 11.500 3.500Q15.500 4 16.500 8L11 11Z" fill="#777" stroke="none" /></Line>
            </TraySlot>
            <TraySlot $w={36}><Line w={22} s={1.4}><path d="M1.500 9.500Q11 .500 20.500 9.500M4.500 12.500Q11 6 17.500 12.500M7.500 15Q11 12 14.500 15" /><circle cx="11" cy="17.500" r="1.600" fill="#1b1b1b" stroke="none" /></Line></TraySlot>
            <TraySlot $w={27}><Line w={22} s={1.4}><path d="M2 8.500H5L9 4.500V17.500L5 13.500H2Z" /><path d="M11.500 8.500Q13 11 11.500 13.500M14 6.500Q17 11 14 15.500" /><path d="M17 4.500Q21 11 17 17.500" stroke="#b5a9aa" /></Line></TraySlot>
            <TraySlot $w={31}><Line w={22} s={1.4}><path d="M7.500 17H18.500V6.500H10M20 10.500V13" /><path d="M1.800 4.500H6.200V8.500H1.800ZM2.800 2.500V4.500M5.200 2.500V4.500M4 8.500V17H6M8.500 15V11H11V15Z" fill="#1b1b1b" strokeWidth="1.100" /></Line></TraySlot>
          </TrayIcons>
          <Clock>
            <Label $size={14.5} $gap={-0.3}>7:27 AM</Label>
            <Label $size={14.5} $gap={-0.15}>6/17/2022</Label>
          </Clock>
          <Badge>3</Badge>
        </Tray>
      </Taskbar>
    </Screen>
  );
}
